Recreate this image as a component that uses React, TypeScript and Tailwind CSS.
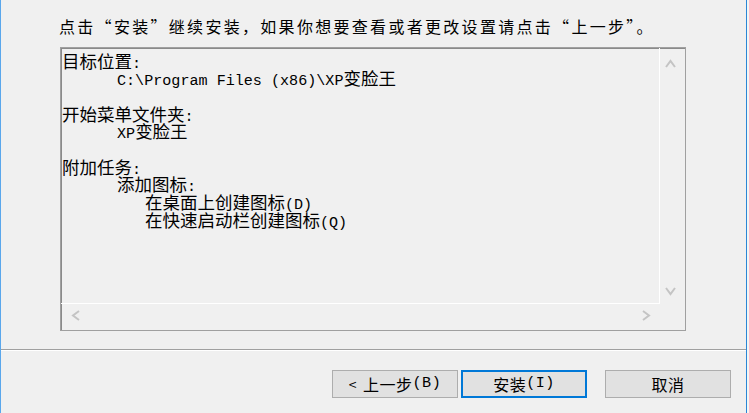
import React from "react";

const cjk = "font-['Noto_Sans_CJK_SC',sans-serif]";
const mono = "font-['Liberation_Mono','Noto_Sans_CJK_SC',monospace] text-[15.1px] leading-none";

const M: React.FC<{ children: React.ReactNode }> = ({ children }) => (
  <span className={mono}>{children}</span>
);

// one line of the summary box, fixed height so mixed fonts don't stretch it
const Line: React.FC<{ indent?: 0 | 1 | 2; children?: React.ReactNode }> = ({
  indent = 0,
  children,
}) => (
  <div
    className={
      indent === 2
        ? "h-[17.7px] pl-[83px] leading-[17.7px]"
        : indent === 1
        ? "h-[17.7px] pl-[55px] leading-[17.7px]"
        : "h-[17.7px] leading-[17.7px]"
    }
  >
    {children}
  </div>
);

const Chevron: React.FC<{ dir: "up" | "down" | "left" | "right" }> = ({ dir }) => {
  const pts = {
    up: "1,8 5.5,2 10,8",
    down: "1,1 5.5,7 10,1",
    left: "8,1 2,5.5 8,10",
    right: "1,1 7,5.5 1,10",
  }[dir];
  const vertical = dir === "up" || dir === "down";
  return (
    <svg
      width={vertical ? 11 : 9}
      height={vertical ? 9 : 11}
      viewBox={vertical ? "0 0 11 9" : "0 0 9 11"}
      className="block"
    >
      <polyline points={pts} fill="none" stroke="#c4c4c4" strokeWidth="2" />
    </svg>
  );
};

const Button: React.FC<{ children: React.ReactNode; primary?: boolean }> = ({
  children,
  primary,
}) => (
  <button
    className={
      primary
        ? "w-[126px] h-[28px] bg-[#e1e1e1] border-2 border-[#0078d7] flex items-center justify-center text-[16px] tracking-[0.5px] text-black"
        : "w-[126px] h-[28px] bg-[#e1e1e1] border border-[#adadad] flex items-center justify-center text-[16px] tracking-[0.5px] text-black"
    }
  >
    {children}
  </button>
);

export default function App() {
  return (
    <div className={`w-[749px] h-[413px] flex bg-[#f0f0f0] text-black ${cjk}`}>
      <div className="w-px bg-[#5aa7ec]" />

      <div className="flex-1 flex flex-col">
        {/* instruction line */}
        <div className="h-[47px] pt-[16px] pl-[58px]">
          <p className="text-[16px] leading-[20px] tracking-[2.3px] whitespace-nowrap">
            点击“安装”继续安装，如果你想要查看或者更改设置请点击“上一步”。
          </p>
        </div>

        {/* read-only summary box */}
        <div className="ml-[59px] w-[626px] h-[284px] border border-[#a0a0a0] shadow-[inset_1px_1px_0_#8a8a8a] grid grid-cols-[599px_25px] grid-rows-[256px_26px]">
          <div className="border-r border-b border-white pt-[3.5px] pl-[1px] text-[17.5px] whitespace-nowrap overflow-hidden">
            <Line>
              目标位置<M>:</M>
            </Line>
            <Line indent={1}>
              <M>C:\Program Files (x86)\XP</M>变脸王
            </Line>
            <Line />
            <Line>
              开始菜单文件夹<M>:</M>
            </Line>
            <Line indent={1}>
              <M>XP</M>变脸王
            </Line>
            <Line />
            <Line>
              附加任务<M>:</M>
            </Line>
            <Line indent={1}>
              添加图标<M>:</M>
            </Line>
            <Line indent={2}>
              在桌面上创建图标<M>(D)</M>
            </Line>
            <Line indent={2}>
              在快速启动栏创建图标<M>(Q)</M>
            </Line>
          </div>

          <div className="flex flex-col justify-between items-start pl-[5px] pt-[11px] pb-[8px]">
            <Chevron dir="up" />
            <Chevron dir="down" />
          </div>

          <div className="flex justify-between items-start pl-[10px] pr-[9px] pt-[6px]">
            <Chevron dir="left" />
            <Chevron dir="right" />
          </div>
          <div />
        </div>

        {/* etched separator */}
        <div className="mt-[18px] h-[2px] border-t border-[#a0a0a0] border-b border-b-white" />

        {/* buttons */}
        <div className="mt-[19px] flex justify-end pr-[15px]">
          <Button>
            <span className="mr-[6px] text-[14px]">&lt;</span>上一步<M>(B)</M>
          </Button>
          <div className="w-[3px]" />
          <Button primary>
            安装<M>(I)</M>
          </Button>
          <div className="w-[18px]" />
          <Button>取消</Button>
        </div>
      </div>

      <div className="w-px bg-[#2a86d6]" />
      <div className="w-[2px] bg-[#f4f4f4]" />
    </div>
  );
}
